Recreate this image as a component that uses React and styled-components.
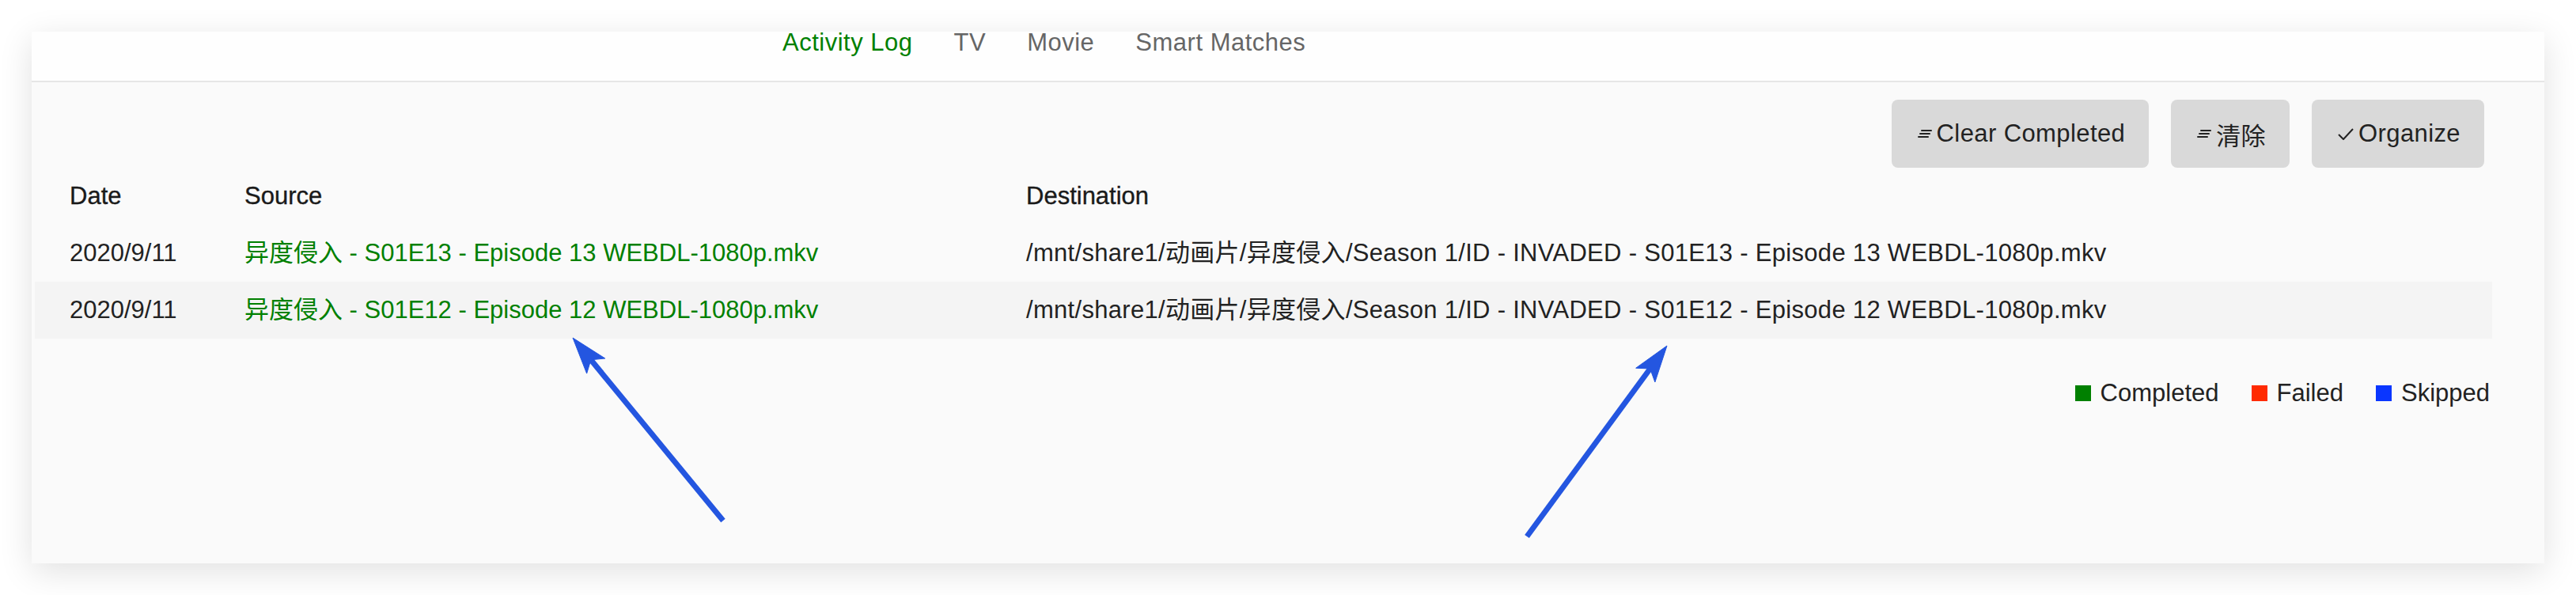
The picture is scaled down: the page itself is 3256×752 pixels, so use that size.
import React from "react";
import styled, { createGlobalStyle } from "styled-components";

const GlobalStyle = createGlobalStyle`
    html, body {
        margin: 0;
        background: #fff;
    }
    body {
        font-family: "Liberation Sans", "Noto Sans CJK SC", sans-serif;
    }
`;

const Page = styled.div`
    position: relative;
    box-sizing: border-box;
    height: 752px;
    padding: 40px;
`;

const Panel = styled.div`
    height: 672px;
    background: #fafafa;
    box-shadow: 0 10px 40px rgba(0, 0, 0, 0.12);
    display: flex;
    flex-direction: column;
`;

const TabBar = styled.nav`
    height: 62px;
    flex-shrink: 0;
    background: #fefefe;
    border-bottom: 2px solid #e6e6e6;
    display: flex;
    align-items: flex-start;
    gap: 52px;
    padding-left: 949px;
`;

const Tab = styled.a`
    font-size: 31px;
    line-height: 28px;
    letter-spacing: 0.5px;
    color: ${(p) => (p.$active ? "#008000" : "#666")};
    text-decoration: none;
    cursor: pointer;
`;

const Body = styled.div`
    flex: 1;
    padding: 22px 66px 0 4px;
`;

const Toolbar = styled.div`
    display: flex;
    justify-content: flex-end;
    gap: 28px;
    padding-right: 10px;
`;

const ActionButton = styled.button`
    height: 86px;
    padding: 0 30px 0 33px;
    border: none;
    border-radius: 8px;
    background: #d9d9d9;
    color: #222;
    font-family: inherit;
    font-size: 31px;
    letter-spacing: 0.4px;
    display: inline-flex;
    align-items: center;
    gap: 6px;
    cursor: pointer;
`;

const Row = styled.div`
    display: grid;
    grid-template-columns: 221px 988px 1fr;
    height: 72px;
    align-items: center;
    background: ${(p) => (p.$striped ? "#f4f4f4" : "transparent")};
`;

const Cell = styled.div`
    padding-left: 44px;
    font-size: 31px;
    line-height: 36px;
    white-space: nowrap;
    letter-spacing: ${(p) => (p.$path ? "0.3px" : "0")};
    color: ${(p) => (p.$link ? "#008000" : "#222")};
`;

const HeadCell = styled(Cell)`
    color: #1a1a1a;
    -webkit-text-stroke: 0.35px #1a1a1a;
`;

const Legend = styled.div`
    display: flex;
    justify-content: flex-end;
    gap: 41px;
    margin-top: 51px;
    padding-right: 3px;
`;

const LegendItem = styled.div`
    display: flex;
    align-items: baseline;
    gap: 12px;
    font-size: 31px;
    line-height: 36px;
    color: #222;
`;

const Swatch = styled.span`
    width: 20px;
    height: 20px;
    background: ${(p) => p.$color};
`;

const Overlay = styled.svg`
    position: absolute;
    top: 0;
    left: 0;
    width: 100%;
    height: 100%;
    pointer-events: none;
`;

const ClearIcon = () => (
    <svg width="18" height="10" viewBox="0 0 18 10">
        <g stroke="#222" strokeWidth="2" strokeLinecap="round">
            <line x1="5" y1="1" x2="17" y2="1" />
            <line x1="3" y1="5" x2="15" y2="5" />
            <line x1="1" y1="9" x2="13" y2="9" />
        </g>
    </svg>
);

const CheckIcon = () => (
    <svg width="20" height="15" viewBox="0 0 20 15">
        <polyline points="1,8 7,14 19,1" fill="none" stroke="#222" strokeWidth="2" />
    </svg>
);

const Arrow = ({ from, to }) => {
    const dx = to[0] - from[0];
    const dy = to[1] - from[1];
    const len = Math.hypot(dx, dy);
    const ux = dx / len;
    const uy = dy / len;
    const nx = -uy;
    const ny = ux;
    const head = 46;
    const half = 15;
    const notch = 36;
    const bx = to[0] - ux * head;
    const by = to[1] - uy * head;
    const mx = to[0] - ux * notch;
    const my = to[1] - uy * notch;
    const pts = [
        [to[0], to[1]],
        [bx + nx * half, by + ny * half],
        [mx, my],
        [bx - nx * half, by - ny * half],
    ]
        .map((p) => p.join(","))
        .join(" ");
    return (
        <g fill="#2456e0" stroke="#2456e0">
            <line x1={from[0]} y1={from[1]} x2={mx} y2={my} strokeWidth="7" />
            <polygon points={pts} strokeWidth="1" />
        </g>
    );
};

const logs = [
    {
        date: "2020/9/11",
        source: "异度侵入 - S01E13 - Episode 13 WEBDL-1080p.mkv",
        dest: "/mnt/share1/动画片/异度侵入/Season 1/ID - INVADED - S01E13 - Episode 13 WEBDL-1080p.mkv",
    },
    {
        date: "2020/9/11",
        source: "异度侵入 - S01E12 - Episode 12 WEBDL-1080p.mkv",
        dest: "/mnt/share1/动画片/异度侵入/Season 1/ID - INVADED - S01E12 - Episode 12 WEBDL-1080p.mkv",
    },
];

const legend = [
    { label: "Completed", color: "#008000" },
    { label: "Failed", color: "#ff2a00" },
    { label: "Skipped", color: "#0a36ff" },
];

const App = () => {
    return (
        <Page>
            <GlobalStyle />
            <Panel>
                <TabBar>
                    <Tab $active>Activity Log</Tab>
                    <Tab>TV</Tab>
                    <Tab>Movie</Tab>
                    <Tab>Smart Matches</Tab>
                </TabBar>
                <Body>
                    <Toolbar>
                        <ActionButton>
                            <ClearIcon />
                            Clear Completed
                        </ActionButton>
                        <ActionButton>
                            <ClearIcon />
                            清除
                        </ActionButton>
                        <ActionButton>
                            <CheckIcon />
                            Organize
                        </ActionButton>
                    </Toolbar>
                    <Row>
                        <HeadCell>Date</HeadCell>
                        <HeadCell>Source</HeadCell>
                        <HeadCell>Destination</HeadCell>
                    </Row>
                    {logs.map((v, i) => (
                        <Row key={i} $striped={i % 2 === 1}>
                            <Cell>{v.date}</Cell>
                            <Cell $link>{v.source}</Cell>
                            <Cell $path>{v.dest}</Cell>
                        </Row>
                    ))}
                    <Legend>
                        {legend.map((v) => (
                            <LegendItem key={v.label}>
                                <Swatch $color={v.color} />
                                {v.label}
                            </LegendItem>
                        ))}
                    </Legend>
                </Body>
            </Panel>
            <Overlay>
                <Arrow from={[914, 658]} to={[724, 427]} />
                <Arrow from={[1930, 678]} to={[2107, 437]} />
            </Overlay>
        </Page>
    );
};

export default App;
